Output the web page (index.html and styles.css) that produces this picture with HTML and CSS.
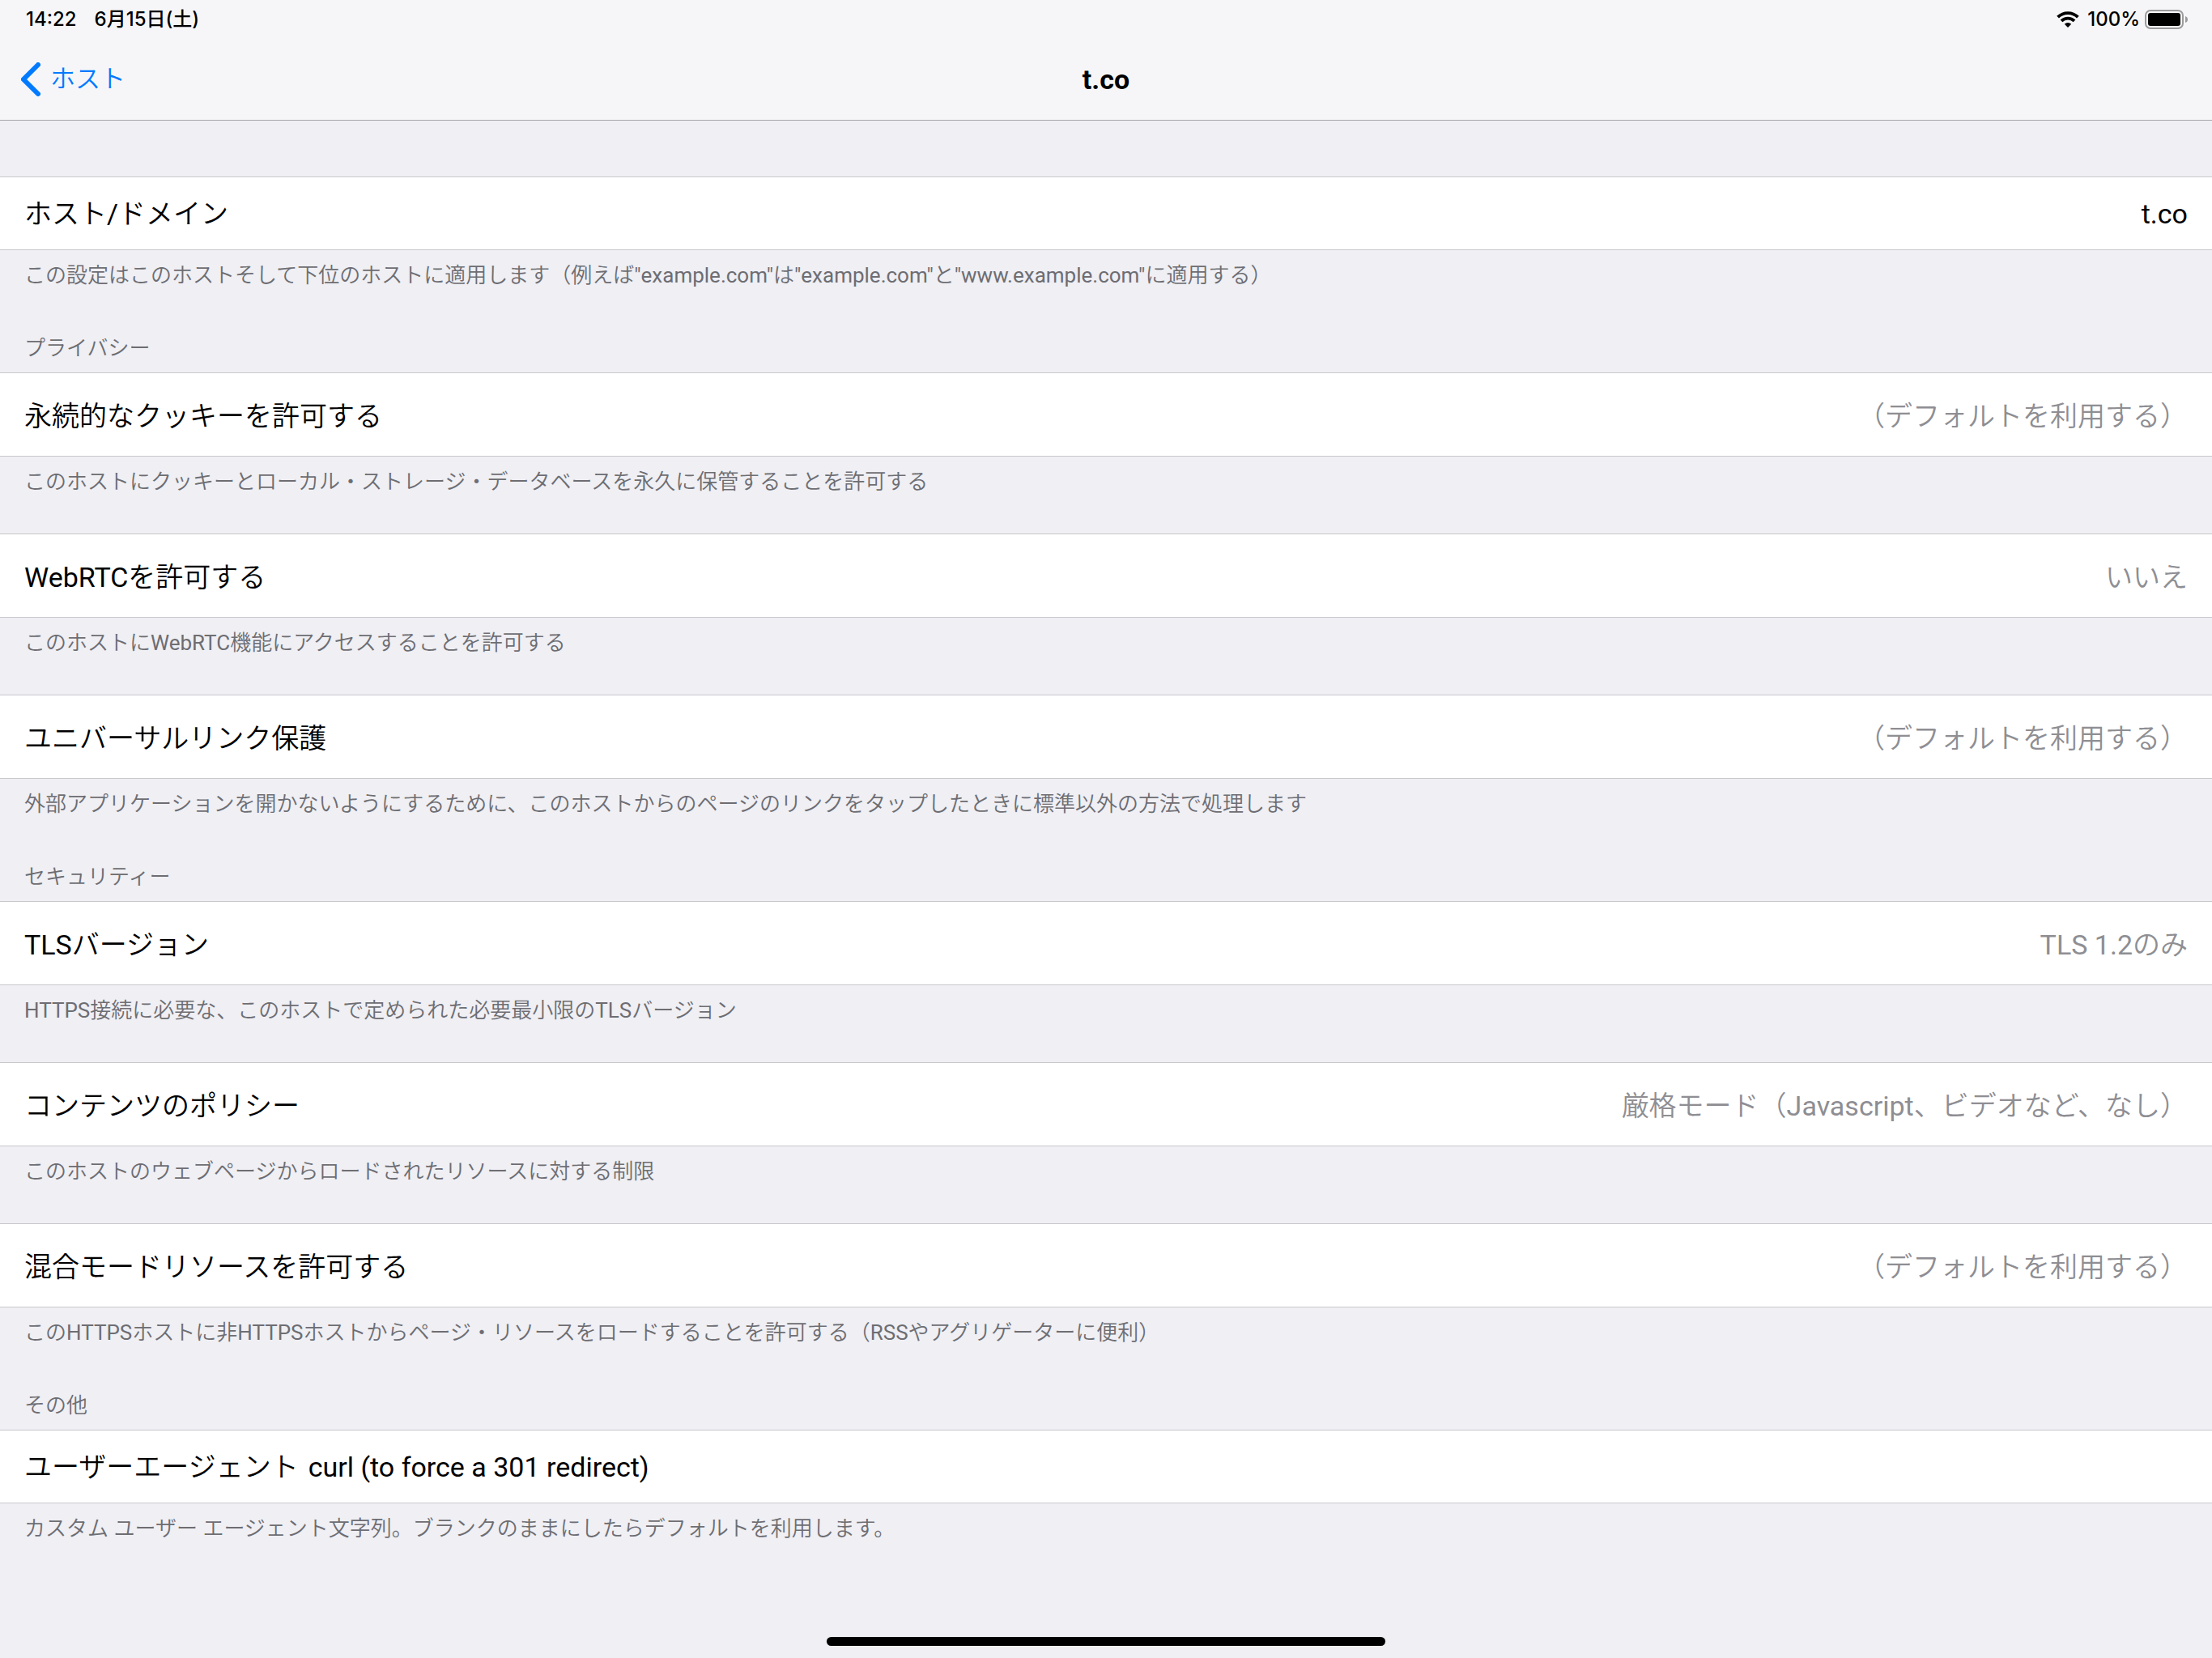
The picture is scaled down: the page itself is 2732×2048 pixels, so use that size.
FILE: index.html
```html
<!DOCTYPE html>
<html lang="ja">
<head>
<meta charset="utf-8">
<meta name="viewport" content="width=device-width, initial-scale=1">
<title>t.co</title>
<link rel="stylesheet" href="styles.css">
</head>
<body>
<header class="top">
  <div class="status">
    <div class="status-group status-left"><time>14:22</time><span class="date">6月15日(土)</span></div>
    <div class="status-group status-right">
      <svg class="wifi" viewBox="0 0 28 20" aria-hidden="true">
        <path d="M1.600 7.200A17.500 17.500 0 0 1 26.400 7.200M6 11.900A11.300 11.300 0 0 1 22 11.900" fill="none" stroke="#000" stroke-width="3.800"/>
        <path d="M9.800 15.800A6 6 0 0 1 18.200 15.800L14 20Z"/>
      </svg>
      <span>100%</span>
      <svg class="battery" viewBox="0 0 54 24" aria-hidden="true">
        <rect x="1" y="1" width="46" height="22" rx="6" fill="none" stroke="#9b9b9d" stroke-width="2"/>
        <rect x="4" y="4" width="40" height="16" rx="3"/>
        <path d="M50 8q3 1 3 4t-3 4z" fill="#9b9b9d"/>
      </svg>
    </div>
  </div>
  <nav class="nav">
    <a class="back" href="#">
      <svg class="chevron" viewBox="0 0 24 42" aria-hidden="true"><path d="M21 3 3 21 21 39" fill="none" stroke="#007aff" stroke-width="6" stroke-linecap="round" stroke-linejoin="miter"/></svg>
      <span>ホスト</span>
    </a>
    <h1 class="title">t.co</h1>
  </nav>
</header>
<main class="settings">
  <section class="group">
    <div class="row row-field"><label for="host">ホスト/ドメイン</label><input id="host" class="field field-end" type="text" value="t.co"></div>
    <p class="note">この設定はこのホストそして下位のホストに適用します（例えば"example.com"は"example.com"と"www.example.com"に適用する）</p>
  </section>
  <section class="group">
    <h2 class="heading">プライバシー</h2>
    <button class="row" type="button"><span>永続的なクッキーを許可する</span><span class="value">（デフォルトを利用する）</span></button>
    <p class="note">このホストにクッキーとローカル・ストレージ・データベースを永久に保管することを許可する</p>
  </section>
  <section class="group">
    <button class="row" type="button"><span>WebRTCを許可する</span><span class="value">いいえ</span></button>
    <p class="note">このホストにWebRTC機能にアクセスすることを許可する</p>
  </section>
  <section class="group">
    <button class="row" type="button"><span>ユニバーサルリンク保護</span><span class="value">（デフォルトを利用する）</span></button>
    <p class="note">外部アプリケーションを開かないようにするために、このホストからのページのリンクをタップしたときに標準以外の方法で処理します</p>
  </section>
  <section class="group">
    <h2 class="heading">セキュリティー</h2>
    <button class="row" type="button"><span>TLSバージョン</span><span class="value">TLS 1.2のみ</span></button>
    <p class="note">HTTPS接続に必要な、このホストで定められた必要最小限のTLSバージョン</p>
  </section>
  <section class="group">
    <button class="row" type="button"><span>コンテンツのポリシー</span><span class="value">厳格モード（Javascript、ビデオなど、なし）</span></button>
    <p class="note">このホストのウェブページからロードされたリソースに対する制限</p>
  </section>
  <section class="group">
    <button class="row" type="button"><span>混合モードリソースを許可する</span><span class="value">（デフォルトを利用する）</span></button>
    <p class="note">このHTTPSホストに非HTTPSホストからページ・リソースをロードすることを許可する（RSSやアグリゲーターに便利）</p>
  </section>
  <section class="group">
    <h2 class="heading">その他</h2>
    <div class="row row-field"><label for="agent">ユーザーエージェント</label><input id="agent" class="field" type="text" value="curl (to force a 301 redirect)"></div>
    <p class="note">カスタム ユーザー エージェント文字列。ブランクのままにしたらデフォルトを利用します。</p>
  </section>
</main>
<div class="home-indicator"></div>
</body>
</html>
```
FILE: styles.css
```css
* { box-sizing: border-box; }
body {
  margin: 0;
  min-height: 100vh;
  display: flex;
  flex-direction: column;
  background: #efeff4;
  color: #000;
  font-family: Roboto, "Noto Sans CJK JP DemiLight", "Noto Sans CJK JP Light", "Noto Sans CJK JP", sans-serif;
  font-size: 34px;
  line-height: 48px;
}
.top {
  background: #f6f6f8;
  border-bottom: 1px solid #a7a7aa;
}
.status {
  display: flex;
  justify-content: space-between;
  padding: 6px 29px 6px 32px;
  font-family: Inter, "Noto Sans CJK JP", sans-serif;
  font-size: 24px;
  line-height: 36px;
  font-weight: 500;
}
.status-group { display: flex; align-items: center; }
.status-left { gap: 22px; }
.status-right { gap: 6px; }
.wifi { width: 28px; height: 20px; margin-right: 4px; }
.battery { width: 54px; height: 24px; }
.nav {
  display: grid;
  grid-template-columns: 1fr auto 1fr;
  align-items: center;
  height: 100px;
  padding: 0 26px;
}
.back {
  display: flex;
  align-items: center;
  gap: 12px;
  color: #007aff;
  font-size: 31px;
  text-decoration: none;
}
.chevron { width: 24px; height: 42px; }
.title { margin: 0; font-size: 34px; font-weight: 700; }
.settings { padding-top: 69px; }
.heading, .note {
  margin: 0;
  padding: 0 30px;
  color: #6d6d72;
  font-size: 26px;
  line-height: 36px;
  font-weight: 400;
}
.heading { padding-top: 8px; padding-bottom: 12px; }
.note { padding-top: 13px; padding-bottom: 46px; }
.row {
  display: flex;
  align-items: center;
  justify-content: space-between;
  width: 100%;
  min-height: 104px;
  padding: 3px 30px 0;
  border: solid #c8c7cc;
  border-width: 1px 0;
  background: #fff;
  color: #000;
  font: inherit;
  text-align: left;
}
.row-field { min-height: 91px; padding-top: 0; gap: 12px; }
.value { color: #8e8e93; }
.field {
  flex: 1;
  min-width: 0;
  padding: 0;
  border: 0;
  outline: 0;
  background: none;
  color: inherit;
  font: inherit;
}
.field-end { text-align: right; }
.home-indicator {
  width: 690px;
  max-width: 50%;
  height: 11px;
  margin: auto auto 15px;
  border-radius: 6px;
  background: #000;
}
```
